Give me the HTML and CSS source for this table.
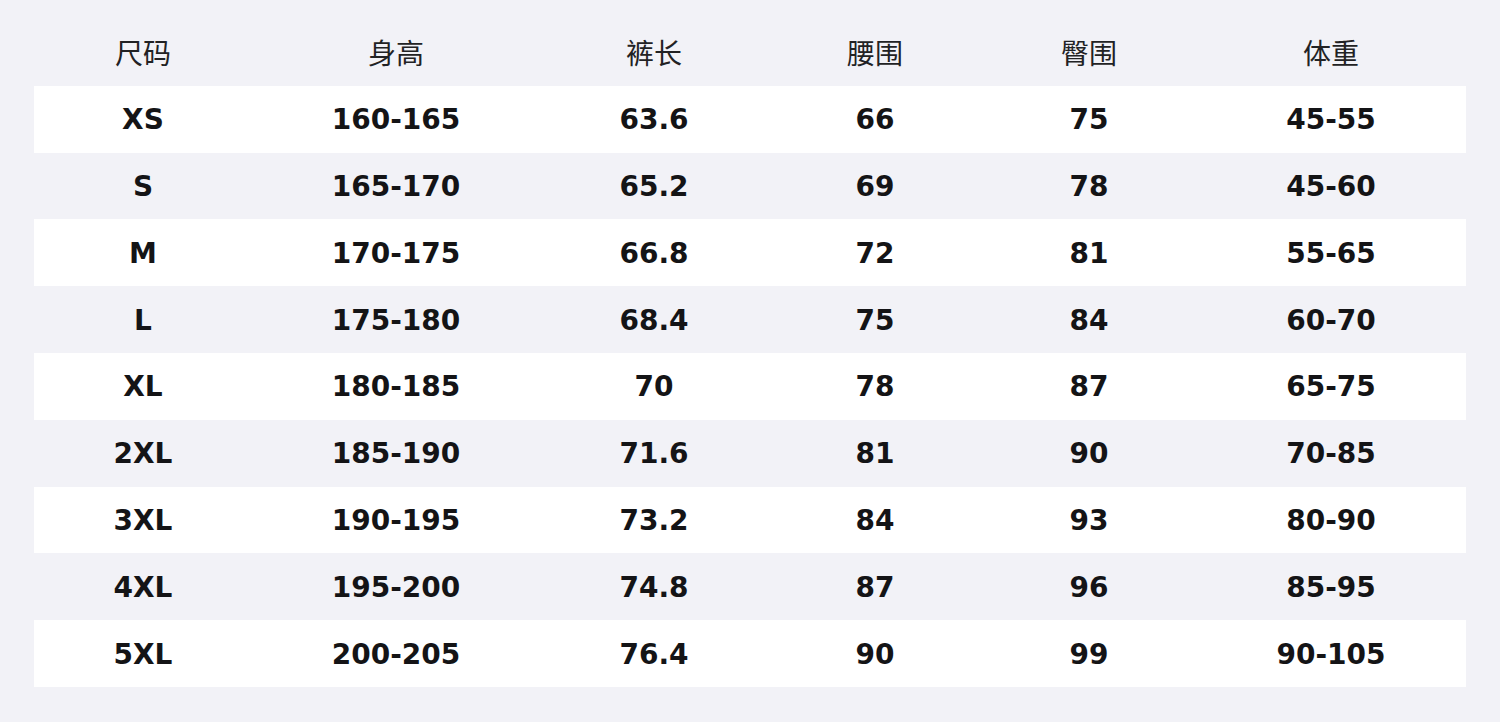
FILE: index.html
```html
<!DOCTYPE html>
<html lang="zh">
<head>
<meta charset="utf-8">
<link rel="stylesheet" href="styles.css">
</head>
<body>
<div class="page">
  <div class="table">
    <div class="row head"><div>尺码</div><div>身高</div><div>裤长</div><div>腰围</div><div>臀围</div><div>体重</div></div>
    <div class="row white"><div>XS</div><div>160-165</div><div>63.6</div><div>66</div><div>75</div><div>45-55</div></div>
    <div class="row"><div>S</div><div>165-170</div><div>65.2</div><div>69</div><div>78</div><div>45-60</div></div>
    <div class="row white"><div>M</div><div>170-175</div><div>66.8</div><div>72</div><div>81</div><div>55-65</div></div>
    <div class="row"><div>L</div><div>175-180</div><div>68.4</div><div>75</div><div>84</div><div>60-70</div></div>
    <div class="row white"><div>XL</div><div>180-185</div><div>70</div><div>78</div><div>87</div><div>65-75</div></div>
    <div class="row"><div>2XL</div><div>185-190</div><div>71.6</div><div>81</div><div>90</div><div>70-85</div></div>
    <div class="row white"><div>3XL</div><div>190-195</div><div>73.2</div><div>84</div><div>93</div><div>80-90</div></div>
    <div class="row"><div>4XL</div><div>195-200</div><div>74.8</div><div>87</div><div>96</div><div>85-95</div></div>
    <div class="row white"><div>5XL</div><div>200-205</div><div>76.4</div><div>90</div><div>99</div><div>90-105</div></div>
  </div>
</div>
</body>
</html>
```
FILE: styles.css
```css
html, body {
  margin: 0;
  padding: 0;
  background: #f2f2f7;
}
.page {
  width: 1500px;
  height: 722px;
  box-sizing: border-box;
  padding: 19px 34px 0 34px;
  background: #f2f2f7;
}
.table {
  display: flex;
  flex-direction: column;
}
.row {
  display: grid;
  grid-template-columns: 218px 288px 228px 214px 214px 270px;
  height: 66.8px;
  align-items: center;
  text-align: center;
  font-family: "DejaVu Sans", "Noto Sans CJK SC", sans-serif;
  font-weight: bold;
  font-size: 28px;
  color: #141416;
  padding-top: 1px;
  box-sizing: border-box;
}
.row.white {
  background: #ffffff;
}
.row.head {
  font-family: "Noto Sans CJK SC", sans-serif;
  font-weight: normal;
  font-size: 28px;
  color: #222224;
  padding-top: 0;
}
```
